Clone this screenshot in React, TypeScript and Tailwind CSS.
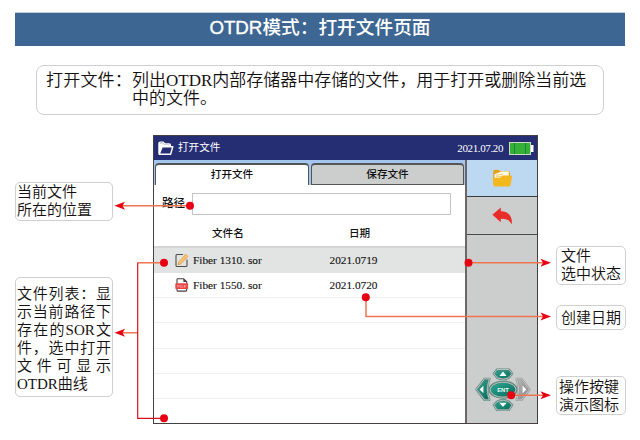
import type { ReactNode } from 'react';

const serif = "font-['Liberation_Serif','Noto_Sans_CJK_SC',serif]";

function Latin({ children }: { children: ReactNode }) {
  return <span className="font-normal">{children}</span>;
}

function Callout({ className = '', children }: { className?: string; children: ReactNode }) {
  return (
    <div className={`rounded-[5px] border border-[#cfcfcf] bg-white text-[15px] leading-[18px] font-[350] whitespace-nowrap ${className}`}>
      {children}
    </div>
  );
}

function FolderOutline() {
  return (
    <svg className="h-[15px] w-[16px]" viewBox="0 0 16 15" fill="none" stroke="#fff" strokeLinejoin="round">
      <path d="M1 12.6V2.3Q1 1.2 2.1 1.2H5.2L6.8 3H11.3Q12.4 3 12.4 4.1V5.4" strokeWidth="1.3" />
      <path d="M1 13V2.2H5L6.4 4H12V5.6H4.2Z" fill="#fff" strokeWidth=".4" />
      <path d="M1.2 13.3L4.2 5.8H14.8L12.6 13.3Z" fill="#252d73" strokeWidth="1.4" />
    </svg>
  );
}

function Battery() {
  return (
    <svg className="h-[13px] w-[25px]" viewBox="0 0 25 13">
      <rect x="0.5" y="0.5" width="21" height="12" fill="#36b035" stroke="#cfd8c8" />
      <path d="M5.5 1V12M16.5 1V12" stroke="#178448" />
      <rect x="22" y="3" width="2.5" height="7" fill="#fff" />
    </svg>
  );
}

function EditIcon() {
  return (
    <svg className="h-[15px] w-[14px]" viewBox="0 0 14 15" fill="none">
      <path d="M8 1.5H2Q1 1.5 1 2.5V12.5Q1 13.5 2 13.5H11Q12 13.5 12 12.5V6.5" stroke="#514b4b" strokeWidth="1.1" />
      <path d="M10.8 1.3L12.8 3.3L6 10.7L3.2 11.7L4 8.7Z" fill="#f8d79b" stroke="#e99a32" />
      <path d="M9.4 2.9L11.3 4.9M5.2 9.5L10.7 3.7" stroke="#e99a32" strokeWidth="0.7" />
    </svg>
  );
}

function PdfIcon() {
  return (
    <svg className="h-[14px] w-[14px]" viewBox="0 0 14 14">
      <path d="M2 6V1.6Q2 .8 2.8 .8H8.6L11.7 3.8V6M2 10V12.2Q2 13.1 2.8 13.1H11Q11.7 13.1 11.7 12.2V10" fill="#fff" stroke="#453e3e" strokeWidth="1.1" />
      <path d="M8.4 .8V4H11.7Z" fill="#453e3e" />
      <rect x="0.3" y="5.3" width="12.8" height="5.8" rx="0.8" fill="#e64545" />
      <text x="6.9" y="9.6" textAnchor="middle" fontSize="4" fill="#ffd9d4" fontFamily="Liberation Sans, sans-serif" letterSpacing=".5">PDF</text>
    </svg>
  );
}

function FolderColor() {
  return (
    <svg className="h-[18px] w-[21px]" viewBox="0 0 21 18">
      <path d="M1.2 9V2.4Q1.2 .8 2.8 .8H6.5L8.3 2.2H16.5Q18 2.2 18 3.8V9Z" fill="#dfa51d" />
      <path d="M2.5 5.2L9.5 2.6H16.8V9H2.5Z" fill="#fff9e5" />
      <path d="M4 6.3L11 5.1M4 8L9 7.3" stroke="#e7bd5b" strokeWidth=".8" />
      <path d="M.7 10Q.6 8.8 1.8 8.8H8.2L10.3 6.4H18.8Q20.2 6.4 20 7.8L18.6 16.2Q18.4 17.6 17 17.6H2.8Q1.5 17.6 1.4 16.2Z" fill="#f4b81f" />
    </svg>
  );
}

function BackArrow() {
  return (
    <svg className="h-[18px] w-[21px]" viewBox="0 0 21 18">
      <path d="M.4 7.7L8.8 .4V4.2C16.3 4.2 20.4 9 19.9 17.2C17.3 13 14.2 11.5 8.8 11.8V15.3Z" fill="#e82d2a" />
    </svg>
  );
}

function KeyPad() {
  return (
    <svg className="h-[44px] w-[56px]" viewBox="0 0 56 44">
      <defs>
        <linearGradient id="key" x1="0" y1="0" x2="1" y2="1">
          <stop offset="0" stopColor="#35a996" />
          <stop offset="1" stopColor="#04695b" />
        </linearGradient>
        <linearGradient id="off" x1="0" y1="0" x2="1" y2="1">
          <stop offset="0" stopColor="#b9b9b9" />
          <stop offset="1" stopColor="#858585" />
        </linearGradient>
      </defs>
      <g stroke="#63877f" strokeWidth="2.2" strokeLinejoin="round">
        <path d="M22 1.5H34L37.2 5.6L33.6 10Q28 12.5 22.4 10L18.8 5.6Z" fill="url(#key)" />
        <path d="M22 42H34L37.2 37L33.6 33.4Q28 31 22.4 33.4L18.8 37Z" fill="url(#key)" />
        <path d="M9.5 10.8H14.5Q10.5 21.5 14.5 32H9.5L1.5 21.5Z" fill="url(#key)" />
        <path d="M46.5 10.8H41.5Q45.5 21.5 41.5 32H46.5L54.5 21.5Z" fill="url(#off)" stroke="#989898" />
        <ellipse cx="28" cy="21.7" rx="13.4" ry="8" fill="url(#key)" />
      </g>
      <g fill="none" stroke="#e0ebe7" strokeWidth=".6" strokeLinejoin="round">
        <path d="M22 1.5H34L37.2 5.6L33.6 10Q28 12.5 22.4 10L18.8 5.6Z" />
        <path d="M22 42H34L37.2 37L33.6 33.4Q28 31 22.4 33.4L18.8 37Z" />
        <path d="M9.5 10.8H14.5Q10.5 21.5 14.5 32H9.5L1.5 21.5Z" />
        <path d="M46.5 10.8H41.5Q45.5 21.5 41.5 32H46.5L54.5 21.5Z" />
        <ellipse cx="28" cy="21.7" rx="12.9" ry="7.5" />
      </g>
      <path d="M28 3.6L31.6 8H24.4ZM28 39L24.4 34.8H31.6ZM4.6 21.5L8.4 17.8V25.2ZM51.4 21.5L47.6 17.8V25.2Z" fill="#fff" />
      <text x="28" y="23.8" textAnchor="middle" fontSize="5.8" fontWeight="700" fill="#e8fff8" fontFamily="Liberation Sans, sans-serif">ENT</text>
    </svg>
  );
}

function Row({ icon, name, date }: { icon?: ReactNode; name?: string; date?: string }) {
  return (
    <div className="flex h-[25.2px] items-center border-b border-[#f0f0f0] pl-[21px] text-[11.3px] [-webkit-text-stroke:0.12px_#111]">
      <span className="flex w-[18px] items-center">{icon}</span>
      <span className="w-[136.5px] whitespace-nowrap">{name}</span>
      <span>{date}</span>
    </div>
  );
}

function Device() {
  return (
    <div className="flex h-[289px] w-[385px] flex-col border border-[#453f40] bg-white text-[#111]">
      <header className="flex h-[24px] shrink-0 items-center bg-[#252d73] pr-[3px] pl-[4px] text-white">
        <FolderOutline />
        <span className="ml-[4px] text-[10.6px]">打开文件</span>
        <span className="mr-[6px] ml-auto text-[11px] tracking-[-0.38px]">2021.07.20</span>
        <Battery />
      </header>
      <div className="flex min-h-0 flex-1">
        <main className="flex w-[313px] flex-col border-r-2 border-[#6d6666]">
          <div className="flex h-[25px] shrink-0 items-end gap-[2px] border-t border-[#a4c5ed] bg-[#a4c5ed] pl-px text-[10.6px] font-medium">
            <div className="flex h-[22px] w-[154px] items-center justify-center rounded-t-[4px] border border-t-2 border-b-0 border-[#555] bg-white">打开文件</div>
            <div className="flex h-[22px] w-[153px] items-center justify-center rounded-t-[4px] border border-t-2 border-[#555] bg-[#cccecd]">保存文件</div>
          </div>
          <div className="flex h-[37px] shrink-0 items-center pl-[8px]">
            <span className="w-[30px] text-[11.6px] font-medium">路径</span>
            <span className="h-[22px] w-[259px] border border-[#c4c4c4]" />
          </div>
          <div className="flex h-[24px] shrink-0 items-center pl-[58px] text-[10.6px] font-medium">
            <span className="w-[137px]">文件名</span>
            <span>日期</span>
          </div>
          <div className="flex h-[27px] shrink-0 items-center border-t-2 border-[#d4d6d5] bg-[#e2e4e3] pl-[21px] text-[11.3px] [-webkit-text-stroke:0.12px_#111]">
            <span className="w-[18px]"><EditIcon /></span>
            <span className="w-[136.5px] whitespace-nowrap">Fiber 1310. sor</span>
            <span>2021.0719</span>
          </div>
          <Row icon={<PdfIcon />} name="Fiber 1550. sor" date="2021.0720" />
          <Row />
          <Row />
          <Row />
          <Row />
        </main>
        <aside className="flex flex-1 flex-col bg-[#cccecd]">
          <div className="flex h-[37px] items-center justify-center border-b border-[#3b3b3b] bg-[#bdd9f1]"><FolderColor /></div>
          <div className="flex h-[38px] items-center justify-center border-b border-[#4b4b4b]"><BackArrow /></div>
          <div className="mt-auto mb-[11px] ml-[8px]"><KeyPad /></div>
        </aside>
      </div>
    </div>
  );
}

function Leaders() {
  return (
    <svg className="pointer-events-none absolute inset-0 h-[440px] w-[640px]" viewBox="0 0 640 440" fill="none">
      <g stroke="#ef7550" strokeWidth="1.5">
        <path d="M190 205.7H120M138 262.8H164M138 332.8H120M469 262.8H544M366 298V316.6H544M511 395.2H544" />
      </g>
      <path d="M137.7 262.5V418.3H164" stroke="#d9131f" strokeWidth="1.2" />
      <g fill="#e60012">
        <circle cx="190" cy="205.7" r="4" />
        <circle cx="164" cy="262.8" r="4" />
        <circle cx="164" cy="418.3" r="4" />
        <circle cx="468.5" cy="262.8" r="4" />
        <circle cx="365.8" cy="297.3" r="4" />
        <circle cx="511.2" cy="395.2" r="4" />
        <path d="M114.5 205.7L125 201.7L122.5 205.7L125 209.7Z" />
        <path d="M114.5 332.8L125 328.8L122.5 332.8L125 336.8Z" />
        <path d="M551 262.8L540.5 258.8L543 262.8L540.5 266.8Z" />
        <path d="M551 316.6L540.5 312.6L543 316.6L540.5 320.6Z" />
        <path d="M551 395.2L540.5 391.2L543 395.2L540.5 399.2Z" />
      </g>
    </svg>
  );
}

export default function App() {
  return (
    <div lang="zh-CN" className={`relative h-[440px] w-[640px] overflow-hidden bg-white pt-[12px] text-[#151010] ${serif}`}>
      <h1 className="mx-[15px] flex h-[33.5px] items-center justify-center border-t border-[#c5cfdf] bg-[#3d6692] font-['Liberation_Sans','Noto_Sans_CJK_SC',sans-serif] text-[18.7px] font-medium text-white">
        <span className="relative -top-px whitespace-nowrap"><span className="[-webkit-text-stroke:0.4px_#fff]">OTDR</span>模式：打开文件页面</span>
      </h1>
      <section className="mt-[19.5px] ml-[36px] flex h-[50px] w-[568px] rounded-[8px] border border-[#cfcfcf] pt-[6px] pl-[9px] text-[17px] leading-[18px] font-[350] whitespace-nowrap">
        <span className="w-[86px] tracking-[0.2px]">打开文件：</span>
        <span>列出<Latin>OTDR</Latin>内部存储器中存储的文件，用于打开或删除当前选<br />中的文件。</span>
      </section>
      <div className="mt-[20px] flex pl-[15px]">
        <div className="w-[138px] pt-[47px]">
          <Callout className="h-[39px] w-[98px] pl-px">当前文件<br />所在的位置</Callout>
          <Callout className="mt-[56px] h-[120px] w-[98px] px-px pt-[7px]">
            <div className="[text-align-last:justify]">文件列表：显</div>
            <div className="[text-align-last:justify]">示当前路径下</div>
            <div className="[text-align-last:justify]">存在的<Latin>SOR</Latin>文</div>
            <div className="[text-align-last:justify]">件，选中打开</div>
            <div className="[text-align-last:justify]">文件可显示</div>
            <div><Latin>OTDR</Latin>曲线</div>
          </Callout>
        </div>
        <Device />
        <div className="pt-[111px] pl-[18px]">
          <Callout className="h-[39px] w-[70px] pl-[4px]">文件<br />选中状态</Callout>
          <Callout className="mt-[20px] h-[25px] w-[70px] pt-[3px] pl-[4px]">创建日期</Callout>
          <Callout className="mt-[46px] h-[39px] w-[70px] pt-px pl-[2px]">操作按键<br />演示图标</Callout>
        </div>
      </div>
      <Leaders />
    </div>
  );
}
